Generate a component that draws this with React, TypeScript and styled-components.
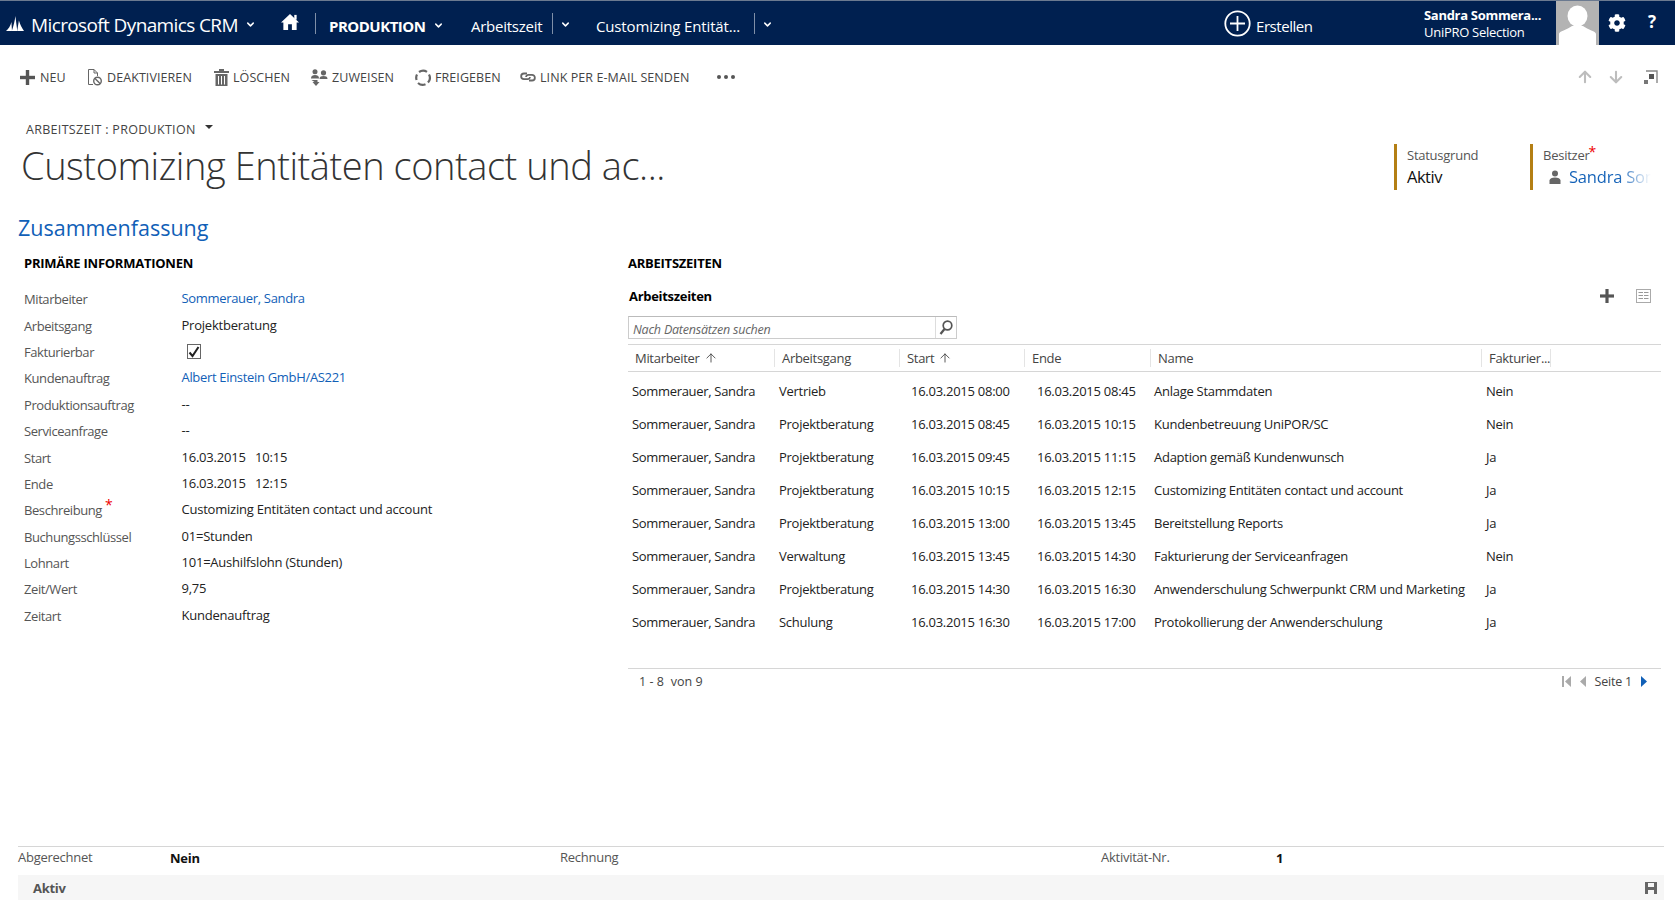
import React from 'react';
import styled, { createGlobalStyle } from 'styled-components';
import { ChevronDown, ArrowUp, ArrowDown } from 'lucide-react';
import { FaCog } from 'react-icons/fa';

const GlobalStyle = createGlobalStyle`
  html, body { margin: 0; padding: 0; background: #fff; }
  body { font-family: "Open Sans", "Liberation Sans", sans-serif; color: #222; overflow: hidden; }
  * { box-sizing: border-box; }
`;

const Page = styled.div`
  width: 1675px;
  height: 900px;
  display: flex;
  flex-direction: column;
  overflow: hidden;
`;

// --- Header ---
const NavBar = styled.header`
  height: 45px;
  flex: none;
  display: flex;
  align-items: center;
  background: #002050;
  border-top: 1px solid #6b7a90;
  color: #fff;
`;

const Brand = styled.div`
  display: flex;
  align-items: center;
  padding-left: 6px;
  width: 278px;
  font-size: 19px;
  letter-spacing: -0.62px;
  span { padding-top: 3px; }
  svg.logo { margin-right: 7px; }
  svg.chev { margin-left: 7px; margin-top: 3px; }
`;

const NavHome = styled.div`
  width: 37px;
  display: flex;
  svg { margin-left: 3px; margin-top: -2px; }
`;

const NavDivider = styled.span`
  width: 1px;
  height: 21px;
  background: #7f8fa8;
  flex: none;
`;

const NavModule = styled.div`
  display: flex;
  align-items: center;
  margin-left: 13px;
  width: 142px;
  padding-top: 5px;
  font-size: 15px;
  font-weight: 700;
  letter-spacing: -0.5px;
  svg { margin-left: 8px; }
`;

const NavCrumb = styled.div<{ $w: number; $gap: number; $track: number }>`
  display: flex;
  align-items: center;
  width: ${p => p.$w}px;
  font-size: 15px;
  letter-spacing: ${p => p.$track}px;
  white-space: nowrap;
  span.txt { width: ${p => p.$gap}px; flex: none; padding-top: 5px; }
  svg { margin-left: 7px; margin-top: 3px; }
`;

const Create = styled.div`
  margin-left: 448px;
  width: 200px;
  display: flex;
  align-items: center;
  font-size: 15px;
  letter-spacing: -0.45px;
  span { margin-left: 5px; margin-top: 6px; }
`;

const UserBox = styled.div`
  width: 132px;
  display: flex;
  flex-direction: column;
  line-height: 17px;
  padding-top: 1px;
  font-size: 13px;
  letter-spacing: -0.28px;
  b { font-weight: 700; letter-spacing: -0.3px; }
`;

const Avatar = styled.div`
  width: 43px;
  height: 44px;
  background: #b3b3b3;
  display: flex;
  justify-content: center;
  overflow: hidden;
`;

const NavIcons = styled.div`
  display: flex;
  align-items: center;
  padding-left: 9px;
  gap: 22px;
  font-size: 17px;
  font-weight: 700;
  span { margin-top: -4px; }
  svg { margin-top: -1px; }
`;

// --- Command bar ---
const Toolbar = styled.div`
  height: 64px;
  flex: none;
  display: flex;
  align-items: center;
  padding-left: 20px;
`;

const Command = styled.div<{ $w: number; $gap?: number }>`
  width: ${p => p.$w}px;
  flex: none;
  display: flex;
  align-items: center;
  gap: ${p => p.$gap ?? 4}px;
  font-size: 12.5px;
  letter-spacing: 0.08px;
  color: #444;
  white-space: nowrap;
`;

const Dots = styled.div`
  display: flex;
  gap: 3px;
  margin-left: 25px;
  i { width: 4px; height: 4px; border-radius: 50%; background: #555; display: block; }
`;

const Nudge = styled.div`
  margin-left: auto;
  padding-right: 17px;
  display: flex;
  align-items: center;
  gap: 13px;
  color: #bdbdbd;
  svg:last-child { margin-left: 6px; }
`;

// --- Title block ---
const TitleRow = styled.div`
  height: 104px;
  flex: none;
  display: flex;
`;

const TitleCol = styled.div`
  width: 1394px;
  padding-top: 11px;
`;

const Crumb = styled.div`
  height: 18px;
  margin-left: 26px;
  display: flex;
  align-items: center;
  font-size: 12.5px;
  letter-spacing: 0.3px;
  color: #444;
  i {
    margin-left: 9px;
    margin-top: -4px;
    border: 4px solid transparent;
    border-top: 4px solid #333;
    border-bottom: 0;
  }
`;

const Title = styled.h1`
  margin: 0 0 0 21px;
  font-size: 38px;
  line-height: 54px;
  font-weight: 300;
  letter-spacing: -0.45px;
  color: #333;
  white-space: nowrap;
`;

const StatusField = styled.div<{ $w: number }>`
  width: ${p => p.$w}px;
  height: 46px;
  margin-top: 35px;
  padding-left: 10px;
  border-left: 3px solid #b47f14;
`;

const StatusLabel = styled.div`
  font-size: 13px;
  line-height: 22px;
  letter-spacing: -0.25px;
  color: #555;
  em { color: #e00; font-style: normal; font-size: 14px; line-height: 0; vertical-align: 3px; margin-left: -1px; }
`;

const StatusValue = styled.div`
  font-size: 16.5px;
  line-height: 21px;
  letter-spacing: -0.5px;
  color: #111;
  display: flex;
  align-items: center;
  white-space: nowrap;
`;

const PersonSlot = styled.span`
  margin-left: 6px;
  display: flex;
`;

const FadeLink = styled.span`
  margin-left: 8px;
  width: 82px;
  overflow: hidden;
  font-size: 16.5px;
  letter-spacing: -0.2px;
  background: linear-gradient(90deg, #1160b7 60%, #ffffff 100%);
  -webkit-background-clip: text;
  background-clip: text;
  color: transparent;
`;

const SectionTitle = styled.h2`
  height: 30px;
  flex: none;
  margin: 0 0 0 18px;
  font-size: 21.5px;
  line-height: 30px;
  font-weight: 400;
  letter-spacing: 0;
  color: #1160b7;
`;

// --- Main form ---
const Main = styled.div`
  display: grid;
  grid-template-columns: 628px 1fr;
`;

const GroupHead = styled.h3`
  margin: 10px 0 0;
  height: 20px;
  font-size: 13px;
  line-height: 20px;
  font-weight: 700;
  letter-spacing: -0.25px;
  color: #000;
`;

const FormCol = styled.div`
  padding-left: 24px;
`;

const FormRows = styled.div`
  margin-top: 13px;
`;

const FormRow = styled.div`
  height: 26.4px;
  display: grid;
  grid-template-columns: 157.5px 1fr;
  align-items: center;
  font-size: 13px;
`;

const FormLabel = styled.div`
  color: #555;
  letter-spacing: -0.42px;
  sup { color: #e00; font-size: 14px; line-height: 0; margin-left: 3px; }
`;

const FormValue = styled.div<{ $link?: boolean }>`
  margin-top: -2px;
  color: ${p => (p.$link ? '#1160b7' : '#222')};
  letter-spacing: ${p => (p.$link ? '-0.32px' : '-0.22px')};
  white-space: pre;
`;

const CheckBox = styled.div`
  margin-left: 5px;
  width: 14px;
  height: 15px;
  border: 1px solid #666;
  display: flex;
  align-items: center;
  justify-content: center;
`;

const GridCol = styled.div`
  padding-right: 14px;
`;

const SubHead = styled.div`
  margin-top: 13px;
  height: 20px;
  display: flex;
  align-items: center;
  justify-content: space-between;
  padding: 0 10px 0 1px;
  font-size: 13px;
  font-weight: 700;
  letter-spacing: -0.3px;
  color: #000;
`;

const SubIcons = styled.div`
  display: flex;
  align-items: center;
  gap: 22px;
`;

const SearchBox = styled.div`
  margin-top: 10px;
  width: 329px;
  height: 23px;
  display: flex;
  border: 1px solid #ccc;
  border-top-color: #bbb;
  font-size: 12.5px;
  font-style: italic;
  letter-spacing: -0.22px;
  color: #666;
`;

const SearchText = styled.div`
  flex: 1;
  padding: 4px 0 0 4px;
  line-height: 17px;
  border-right: 1px solid #ddd;
`;

const SearchBtn = styled.div`
  width: 20px;
  display: flex;
  align-items: center;
  justify-content: center;
`;

const COLS = '147px 125px 125px 126px 331px 69px 1fr';

const HeadRow = styled.div`
  margin-top: 5px;
  height: 28px;
  display: grid;
  grid-template-columns: ${COLS};
  align-items: center;
  border-top: 1px solid #d6d6d6;
  border-bottom: 1px solid #d6d6d6;
  font-size: 13px;
  letter-spacing: -0.3px;
  color: #444;
`;

const HeadCell = styled.div`
  height: 18px;
  line-height: 18px;
  padding-left: 7px;
  display: flex;
  align-items: center;
  gap: 4px;
  white-space: nowrap;
  border-right: 1px solid #e4e4e4;
`;

const Rows = styled.div`
  padding-top: 2px;
`;

const Row = styled.div`
  height: 33px;
  display: grid;
  grid-template-columns: ${COLS};
  align-items: center;
  font-size: 13px;
  letter-spacing: -0.26px;
  color: #222;
`;

const Cell = styled.div`
  white-space: nowrap;
  &:nth-child(1) { padding-left: 4px; letter-spacing: -0.32px; }
  &:nth-child(2) { padding-left: 4px; }
  &:nth-child(3) { padding-left: 11px; }
  &:nth-child(4) { padding-left: 12px; }
  &:nth-child(5) { padding-left: 3px; }
  &:nth-child(6) { padding-left: 4px; }
`;

const Pager = styled.div`
  margin-top: 30px;
  height: 26px;
  padding: 0 14px 0 11px;
  display: flex;
  align-items: center;
  justify-content: space-between;
  border-top: 1px solid #d6d6d6;
  font-size: 12.5px;
  letter-spacing: 0.05px;
  color: #444;
  white-space: pre;
`;

const PageNav = styled.div`
  display: flex;
  align-items: center;
  gap: 9px;
  span { letter-spacing: -0.2px; }
`;

// --- Footer ---
const Footer = styled.footer`
  margin-top: auto;
  flex: none;
  padding: 0 11px 0 18px;
`;

const FooterFields = styled.div`
  height: 29px;
  padding-bottom: 8px;
  display: grid;
  grid-template-columns: 152px 390px 541px 175px 1fr;
  align-items: center;
  border-top: 1px solid #d6d6d6;
  font-size: 13px;
  letter-spacing: -0.26px;
  color: #555;
  b { color: #111; font-weight: 700; margin-top: 2px; }
`;

const StatusBar = styled.div`
  height: 25px;
  display: flex;
  align-items: center;
  justify-content: space-between;
  padding: 0 7px 0 15px;
  background: #f6f6f6;
  font-size: 13px;
  font-weight: 700;
  letter-spacing: -0.3px;
  color: #555;
`;

// --- Icons ---
const Logo = () => (
  <svg className="logo" width="18" height="15" viewBox="0 0 18 15" fill="#fff">
    <path d="M0 15 C2.5 13 4.5 10 5.4 6 L6 15 Z" />
    <path d="M5.8 15 C7.5 10 8.8 5 9.4 0 C10 5 10.6 10 11.3 15 Z" />
    <path d="M11.2 15 C11.8 11 12.4 7.5 12.9 4.5 C14 8 15.8 12 18 15 Z" />
  </svg>
);

const Chev = () => <ChevronDown className="chev" size={11} strokeWidth={3.2} color="#fff" />;

const HomeIcon = () => (
  <svg width="18" height="18" viewBox="0 0 19 18" fill="#fff">
    <path d="M9.5 0.5 L19 9.5 L16.5 9.5 L16.5 17.5 L11.5 17.5 L11.5 11.5 L7.5 11.5 L7.5 17.5 L2.5 17.5 L2.5 9.5 L0 9.5 Z" />
    <rect x="14" y="1.5" width="2.5" height="5" />
  </svg>
);

const CreateIcon = () => (
  <svg width="27" height="27" viewBox="0 0 27 27" fill="none" stroke="#fff" strokeWidth="1.8">
    <circle cx="13.5" cy="13.5" r="12.2" />
    <path d="M13.5 6 V21 M6 13.5 H21" />
  </svg>
);

const AvatarFigure = () => (
  <svg width="43" height="44" viewBox="0 0 43 44" fill="#fff">
    <ellipse cx="21.5" cy="15" rx="10" ry="10.5" />
    <path d="M3 44 V33 C3 30 11 29 16 25 H27 C32 29 40 30 40 33 V44 Z" />
  </svg>
);

const PlusIcon = ({ s = 15 }: { s?: number }) => (
  <svg width={s} height={s} viewBox="0 0 15 15" fill="#555">
    <rect x="5.8" y="0" width="3.4" height="15" />
    <rect x="0" y="5.8" width="15" height="3.4" />
  </svg>
);

const DeactivateIcon = () => (
  <svg width="16" height="17" viewBox="0 0 16 17" fill="none" stroke="#666" strokeWidth="1">
    <path d="M6 15.5 H1.5 V0.5 H7 L10.5 4 V7 M7 0.5 V4 H10.5" />
    <circle cx="10.5" cy="12" r="3.8" strokeWidth="1.4" />
    <path d="M7.8 9.3 L13.2 14.7" strokeWidth="1.4" />
  </svg>
);

const TrashIcon = () => (
  <svg width="15" height="17" viewBox="0 0 15 17" fill="#666">
    <rect x="0" y="2" width="15" height="2" />
    <rect x="5" y="0" width="5" height="2" />
    <path
      fillRule="evenodd"
      d="M1.5 5 H13.5 V17 H1.5 Z M4 7 V15.5 H5 V7 Z M7 7 V15.5 H8 V7 Z M10 7 V15.5 H11 V7 Z"
    />
  </svg>
);

const AssignIcon = () => (
  <svg width="17" height="17" viewBox="0 0 17 17" fill="#666">
    <circle cx="4" cy="2.8" r="2.5" />
    <circle cx="12.5" cy="3.8" r="2.6" />
    <path d="M0 9.5 C0 6.8 1.8 6 4 6 C6.2 6 8 6.8 8 9.5 Z" />
    <path d="M8.5 10 C8.5 7.6 10.3 7 12.5 7 C14.7 7 16.5 7.6 16.5 10 Z" />
    <path d="M1 11 H7 V13 H9 L5.5 17 L2 13 H4 Z" transform="translate(-0.5 0)" />
  </svg>
);

const ShareIcon = () => (
  <svg width="16" height="17" viewBox="0 0 16 17" fill="none" stroke="#666" strokeWidth="2.2">
    <path d="M4 3 A7 7 0 0 1 12 2.8" />
    <path d="M14 5.5 A7 7 0 0 1 13 13.5" />
    <path d="M10.5 15.2 A7 7 0 0 1 3 14" />
    <path d="M1.6 11 A7 7 0 0 1 2 5.5" />
  </svg>
);

const LinkIcon = () => (
  <svg width="16" height="10" viewBox="0 0 16 10" fill="none" stroke="#666" strokeWidth="1.8">
    <path d="M7 1.5 H4 A2.8 2.8 0 0 0 4 7.2 H8 A2.5 2.5 0 0 0 10 5" />
    <path d="M9 8.5 H12 A2.8 2.8 0 0 0 12 2.8 H8 A2.5 2.5 0 0 0 6 5" />
  </svg>
);

const PopoutIcon = () => (
  <svg width="14" height="14" viewBox="0 0 14 14" fill="none">
    <path d="M2 1 H13 V13" stroke="#888" strokeWidth="1.4" />
    <rect x="0" y="10" width="4" height="4" fill="#777" />
    <rect x="5" y="4" width="5" height="5" fill="#555" />
  </svg>
);

const PersonIcon = () => (
  <svg width="12" height="14" viewBox="0 0 12 14" fill="#666">
    <circle cx="6" cy="3.5" r="3" />
    <path d="M0.5 14 V10.5 C0.5 8.5 3 7.5 6 7.5 C9 7.5 11.5 8.5 11.5 10.5 V14 Z" />
  </svg>
);

const GridIcon = () => (
  <svg width="15" height="14" viewBox="0 0 15 14" fill="none">
    <rect x="0.5" y="0.5" width="14" height="13" stroke="#aaa" />
    <path d="M2.5 3.5 H12.5 M2.5 6.5 H12.5 M2.5 9.5 H12.5" stroke="#999" strokeWidth="1.2" />
    <path d="M7.5 2.5 V11.5" stroke="#fff" />
  </svg>
);

const SearchIcon = () => (
  <svg width="14" height="15" viewBox="0 0 14 15" fill="none" stroke="#555" strokeWidth="1.7">
    <circle cx="8.5" cy="5.5" r="4.3" />
    <path d="M5.5 9 L1.5 14" strokeWidth="2.2" />
  </svg>
);

const SmallUp = () => <ArrowUp size={14} strokeWidth={1.5} color="#444" />;

const Check = () => (
  <svg width="12" height="12" viewBox="0 0 12 12" fill="none" stroke="#222" strokeWidth="2">
    <path d="M1.5 6.5 L4.5 10 L10.5 1" />
  </svg>
);

const FirstPage = () => (
  <svg width="9" height="11" viewBox="0 0 9 11" fill="#aaa">
    <rect x="0" y="0" width="2" height="11" />
    <path d="M9 0 V11 L3 5.5 Z" />
  </svg>
);

const PrevPage = () => (
  <svg width="6" height="11" viewBox="0 0 6 11" fill="#aaa">
    <path d="M6 0 V11 L0 5.5 Z" />
  </svg>
);

const NextPage = () => (
  <svg width="6" height="11" viewBox="0 0 6 11" fill="#1160b7">
    <path d="M0 0 V11 L6 5.5 Z" />
  </svg>
);

const SaveIcon = () => (
  <svg width="12" height="12" viewBox="0 0 12 12" fill="#666">
    <path fillRule="evenodd" d="M0 0 H12 V12 H0 Z M3 1 V5 H9 V1 Z M3 8 V12 H9 V8 Z" />
  </svg>
);

// --- Data ---
const fields: { label: string; value?: string; link?: boolean; required?: boolean; check?: boolean }[] = [
  { label: 'Mitarbeiter', value: 'Sommerauer, Sandra', link: true },
  { label: 'Arbeitsgang', value: 'Projektberatung' },
  { label: 'Fakturierbar', check: true },
  { label: 'Kundenauftrag', value: 'Albert Einstein GmbH/AS221', link: true },
  { label: 'Produktionsauftrag', value: '--' },
  { label: 'Serviceanfrage', value: '--' },
  { label: 'Start', value: '16.03.2015   10:15' },
  { label: 'Ende', value: '16.03.2015   12:15' },
  { label: 'Beschreibung', value: 'Customizing Entitäten contact und account', required: true },
  { label: 'Buchungsschlüssel', value: '01=Stunden' },
  { label: 'Lohnart', value: '101=Aushilfslohn (Stunden)' },
  { label: 'Zeit/Wert', value: '9,75' },
  { label: 'Zeitart', value: 'Kundenauftrag' },
];

const rows = [
  ['Vertrieb', '08:00', '08:45', 'Anlage Stammdaten', 'Nein'],
  ['Projektberatung', '08:45', '10:15', 'Kundenbetreuung UniPOR/SC', 'Nein'],
  ['Projektberatung', '09:45', '11:15', 'Adaption gemäß Kundenwunsch', 'Ja'],
  ['Projektberatung', '10:15', '12:15', 'Customizing Entitäten contact und account', 'Ja'],
  ['Projektberatung', '13:00', '13:45', 'Bereitstellung Reports', 'Ja'],
  ['Verwaltung', '13:45', '14:30', 'Fakturierung der Serviceanfragen', 'Nein'],
  ['Projektberatung', '14:30', '16:30', 'Anwenderschulung Schwerpunkt CRM und Marketing', 'Ja'],
  ['Schulung', '16:30', '17:00', 'Protokollierung der Anwenderschulung', 'Ja'],
];

const App: React.FC = () => {
  return (
    <Page>
      <GlobalStyle />
      <NavBar>
        <Brand>
          <Logo />
          <span>Microsoft Dynamics CRM</span>
          <Chev />
        </Brand>
        <NavHome>
          <HomeIcon />
        </NavHome>
        <NavDivider />
        <NavModule>
          PRODUKTION
          <Chev />
        </NavModule>
        <NavCrumb $w={125} $gap={81} $track={-0.25}>
          <span className="txt">Arbeitszeit</span>
          <NavDivider />
          <Chev />
        </NavCrumb>
        <NavCrumb $w={180} $gap={158} $track={-0.15}>
          <span className="txt">Customizing Entität...</span>
          <NavDivider />
          <Chev />
        </NavCrumb>
        <Create>
          <CreateIcon />
          <span>Erstellen</span>
        </Create>
        <UserBox>
          <b>Sandra Sommera...</b>
          <span>UniPRO Selection</span>
        </UserBox>
        <Avatar>
          <AvatarFigure />
        </Avatar>
        <NavIcons>
          <FaCog size={18} />
          <span>?</span>
        </NavIcons>
      </NavBar>

      <Toolbar>
        <Command $w={67} $gap={5}>
          <PlusIcon />
          NEU
        </Command>
        <Command $w={127}>
          <DeactivateIcon />
          DEAKTIVIEREN
        </Command>
        <Command $w={97}>
          <TrashIcon />
          LÖSCHEN
        </Command>
        <Command $w={104}>
          <AssignIcon />
          ZUWEISEN
        </Command>
        <Command $w={105}>
          <ShareIcon />
          FREIGEBEN
        </Command>
        <Command $w={172}>
          <LinkIcon />
          LINK PER E-MAIL SENDEN
        </Command>
        <Dots>
          <i />
          <i />
          <i />
        </Dots>
        <Nudge>
          <ArrowUp size={18} strokeWidth={2.8} />
          <ArrowDown size={18} strokeWidth={2.8} />
          <PopoutIcon />
        </Nudge>
      </Toolbar>

      <TitleRow>
        <TitleCol>
          <Crumb>
            ARBEITSZEIT : PRODUKTION
            <i />
          </Crumb>
          <Title>Customizing Entitäten contact und ac...</Title>
        </TitleCol>
        <StatusField $w={136}>
          <StatusLabel>Statusgrund</StatusLabel>
          <StatusValue>Aktiv</StatusValue>
        </StatusField>
        <StatusField $w={128}>
          <StatusLabel>
            Besitzer<em>*</em>
          </StatusLabel>
          <StatusValue>
            <PersonSlot>
              <PersonIcon />
            </PersonSlot>
            <FadeLink>Sandra Sommerauer</FadeLink>
          </StatusValue>
        </StatusField>
      </TitleRow>

      <SectionTitle>Zusammenfassung</SectionTitle>

      <Main>
        <FormCol>
          <GroupHead>PRIMÄRE INFORMATIONEN</GroupHead>
          <FormRows>
            {fields.map(f => (
              <FormRow key={f.label}>
                <FormLabel>
                  {f.label}
                  {f.required && <sup>*</sup>}
                </FormLabel>
                {f.check ? (
                  <CheckBox>
                    <Check />
                  </CheckBox>
                ) : (
                  <FormValue $link={f.link}>{f.value}</FormValue>
                )}
              </FormRow>
            ))}
          </FormRows>
        </FormCol>

        <GridCol>
          <GroupHead>ARBEITSZEITEN</GroupHead>
          <SubHead>
            Arbeitszeiten
            <SubIcons>
              <PlusIcon s={14} />
              <GridIcon />
            </SubIcons>
          </SubHead>
          <SearchBox>
            <SearchText>Nach Datensätzen suchen</SearchText>
            <SearchBtn>
              <SearchIcon />
            </SearchBtn>
          </SearchBox>
          <HeadRow>
            <HeadCell>
              Mitarbeiter <SmallUp />
            </HeadCell>
            <HeadCell>Arbeitsgang</HeadCell>
            <HeadCell>
              Start <SmallUp />
            </HeadCell>
            <HeadCell>Ende</HeadCell>
            <HeadCell>Name</HeadCell>
            <HeadCell>Fakturier...</HeadCell>
          </HeadRow>
          <Rows>
            {rows.map(r => (
              <Row key={r[1] + r[3]}>
                <Cell>Sommerauer, Sandra</Cell>
                <Cell>{r[0]}</Cell>
                <Cell>16.03.2015 {r[1]}</Cell>
                <Cell>16.03.2015 {r[2]}</Cell>
                <Cell>{r[3]}</Cell>
                <Cell>{r[4]}</Cell>
              </Row>
            ))}
          </Rows>
          <Pager>
            <span>1 - 8  von 9</span>
            <PageNav>
              <FirstPage />
              <PrevPage />
              <span>Seite 1</span>
              <NextPage />
            </PageNav>
          </Pager>
        </GridCol>
      </Main>

      <Footer>
        <FooterFields>
          <span>Abgerechnet</span>
          <b>Nein</b>
          <span>Rechnung</span>
          <span>Aktivität-Nr.</span>
          <b>1</b>
        </FooterFields>
        <StatusBar>
          Aktiv
          <SaveIcon />
        </StatusBar>
      </Footer>
    </Page>
  );
};

export default App;
